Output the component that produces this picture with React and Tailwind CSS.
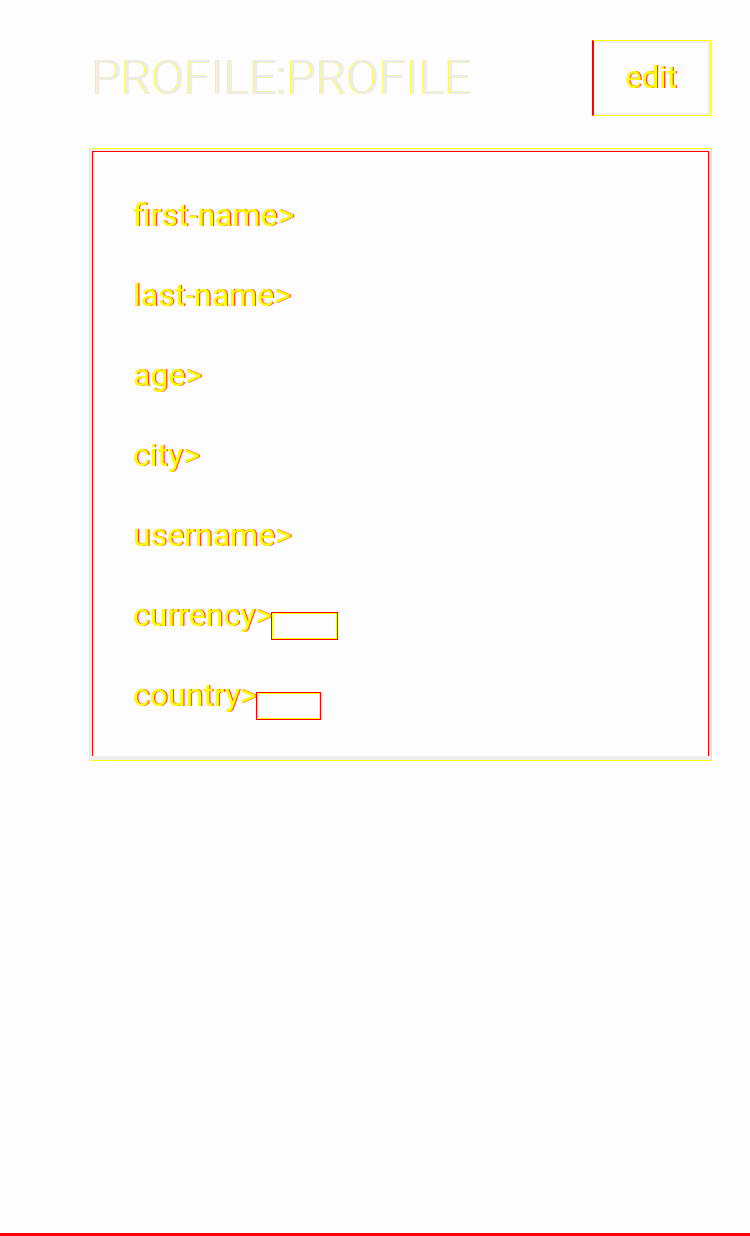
import React from "react";

const labelCls =
  "text-[32px] leading-[80px] text-[#ffff00] [text-shadow:1px_0_0_#ff0000] [font-family:Roboto,'Liberation_Sans',sans-serif]";

function Row({ label, box }) {
  return (
    <div className="flex items-center h-[80px]">
      <span className={labelCls}>{label}</span>
      {box && (
        <span
          className="inline-block border border-[#ffff00] outline outline-1 outline-[#ff0000] h-[26px] mt-[22px]"
          style={{ width: box }}
        />
      )}
    </div>
  );
}

export default function App() {
  return (
    <div className="w-[750px] h-[1236px] bg-[#fdfdfd] relative flex flex-col [font-family:Roboto,'Liberation_Sans',sans-serif]">
      <div className="flex items-start justify-between pl-[92px] pr-[39px] pt-[40px]">
        <h1 className="text-[48px] font-light leading-none mt-[14px] text-[#ebebeb] [text-shadow:-1px_0_0_#ffff00]">
          PROFILE:PROFILE
        </h1>
        <div className="w-[119px] h-[76px] border border-[#ffff00] border-l-2 border-l-[#ff0000] flex">
          <div className="flex-1 border-2 border-[#eeeeee] border-l-0 flex items-center justify-center">
            <span className="text-[31px] text-[#ffff00] [text-shadow:1px_0_0_#ff0000]">edit</span>
          </div>
        </div>
      </div>
      <div className="mx-[89px] mt-[32px] border border-[#ffff00] w-[623px]">
        <div className="border-2 border-[#eeeeee] border-b-[4px]">
          <div className="border-t border-l border-r border-[#ff0000] pl-[40px] pt-[23px] pb-[21px]">
            <Row label="first-name>" />
            <Row label="last-name>" />
            <Row label="age>" />
            <Row label="city>" />
            <Row label="username>" />
            <Row label="currency>" box={65} />
            <Row label="country>" box={63} />
          </div>
        </div>
      </div>
      <div className="mt-auto h-[3px] bg-[#ff0000] w-full" />
    </div>
  );
}
